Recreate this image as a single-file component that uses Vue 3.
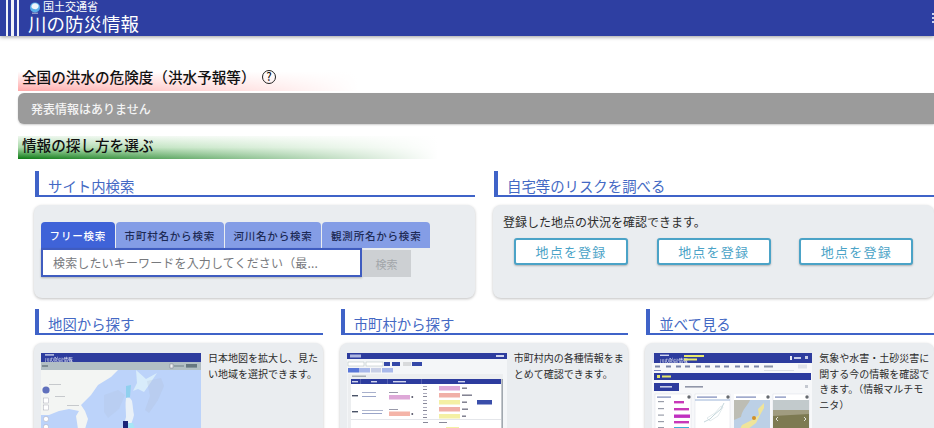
<script setup>
const tabs = ['フリー検索', '市町村名から検索', '河川名から検索', '観測所名から検索']
const spots = [1, 2, 3]
const riskRows = [
  { y: 33, c: '#dea8d8', w: 5 },
  { y: 40, c: '#f0b0a8', w: 10 },
  { y: 47, c: '#f4f0a4', w: 5 },
  { y: 54, c: '#f0b0a8', w: 6 },
  { y: 61, c: '#f4f0a4', w: 4 },
]
const monitorBars = [
  { y: 48, c: '#c838b8', w: 10, h: 2.4 },
  { y: 55, c: '#c838b8', w: 15, h: 2.4 },
  { y: 61.5, c: '#c030c0', w: 16, h: 3.4 },
  { y: 68, c: '#c838b8', w: 15, h: 2.4 },
  { y: 74, c: '#40b0d8', w: 15, h: 2 },
]
const monitorTabs = [3, 14, 24, 33, 44, 53, 63, 72, 83, 92, 102]
</script>

<template>
  <div class="page">
    <header class="top-bar">
      <div class="stripes">
        <span></span><span></span><span></span>
      </div>
      <div class="brand">
        <div class="ministry">
          <svg class="ministry-logo" viewBox="0 0 12 12" width="12" height="12">
            <circle cx="6" cy="5.4" r="5" fill="#58aeea" />
            <path d="M2.6 3.4a4 4 0 0 1 6.8-.4c.6 1.6-.2 3.6-2.2 4.2-2 .4-4-.6-4.8-2.2z" fill="#eef5fb" />
            <path d="M3 11.2h6" stroke="#b8c0dc" stroke-width="1" />
          </svg>
          <span>国土交通省</span>
        </div>
        <div class="site-name">川の防災情報</div>
      </div>
      <div class="burger">
        <span></span><span></span><span></span>
      </div>
    </header>

    <section class="alert-section">
      <h2 class="band band-red">
        全国の洪水の危険度（洪水予報等）
        <span class="help">?</span>
      </h2>
      <div class="notice">発表情報はありません</div>
    </section>

    <h2 class="band band-green">情報の探し方を選ぶ</h2>

    <div class="row-two">
      <div class="block">
        <h3 class="block-title">サイト内検索</h3>
        <div class="panel panel-search">
          <div class="tabs">
            <button
              v-for="(tab, i) in tabs"
              :key="tab"
              class="tab"
              :class="{ active: i === 0 }"
            >{{ tab }}</button>
          </div>
          <div class="search-row">
            <div class="search-input">検索したいキーワードを入力してください（最...</div>
            <button class="search-btn">検索</button>
          </div>
        </div>
      </div>

      <div class="block">
        <h3 class="block-title">自宅等のリスクを調べる</h3>
        <div class="panel panel-risk">
          <p class="risk-text">登録した地点の状況を確認できます。</p>
          <div class="spot-row">
            <button v-for="s in spots" :key="s" class="spot-btn">地点を登録</button>
          </div>
        </div>
      </div>
    </div>

    <div class="row-three">
      <div class="block">
        <h3 class="block-title">地図から探す</h3>
        <div class="panel panel-card">
          <svg class="thumb" viewBox="0 0 160 76" width="160" height="76">
            <rect width="160" height="76" fill="#bcd3fa" />
            <path d="M0 17H77L70 24 57 32 50 42 40 52 44 58 47 66 44 76H37L35 63 38 58 28 56 18 58 8 62 0 62z" fill="#f3f5f3" />
            <path d="M95 17L105 26 116 20 108 32 103 39 97 36 92 38 96 30z" fill="#d8ecfb" />
            <path d="M85 33l5-1-1 12-4 1z" fill="#8fd0ee" />
            <path d="M85 45c3-1 5 0 6 3 1 5 1 10 2 14-1 5-3 9-5 14h-7c1-4 3-7 4-12 0-6-1-13 0-19z" fill="#eaf1f8" />
            <rect x="82" y="68" width="5" height="8" fill="#1b2478" />
            <path d="M87 70h5l2 6h-7z" fill="#a6e6f6" />
            <path d="M106 28l14-3 3 8-6 14-9 13-4-3 5-14z" fill="#aebcd4" opacity=".25" />
            <path d="M63 42l14-5 7 5-6 14-11 9-4-6z" fill="#aebcd4" opacity=".2" />
            <rect x="8" y="31" width="12" height="1" fill="#c6c9cc" />
            <rect x="14" y="43" width="10" height="1" fill="#c6c9cc" />
            <rect x="26" y="52" width="12" height="1" fill="#c6c9cc" />
            <circle cx="5" cy="37" r="3.6" fill="#6070bc" />
            <rect x="2.5" y="45" width="5" height="5" fill="#fff" stroke="#99a" stroke-width=".4" />
            <rect x="2.5" y="52" width="5" height="5" fill="#fff" stroke="#99a" stroke-width=".4" />
            <circle cx="5" cy="66" r="2.6" fill="#fff" stroke="#99a" stroke-width=".4" />
            <circle cx="5" cy="74" r="2.6" fill="#fff" stroke="#99a" stroke-width=".4" />
            <rect width="160" height="9" fill="#2d3c9e" />
            <rect x="4" y="1.2" width="9" height="1.4" fill="#c9cfea" />
            <text x="4" y="7.8" font-size="4.6" fill="#fff">川の防災情報</text>
            <rect y="9" width="160" height="8" fill="#b2bfc4" />
            <rect x="1" y="12" width="6" height="2" fill="#7d8b92" />
            <rect x="129" y="11" width="3" height="4" fill="#eef1f2" stroke="#667" stroke-width=".4" />
            <rect x="133" y="12.4" width="10" height="1.2" fill="#7d8b92" />
            <rect x="145" y="11" width="11" height="3.6" fill="#667780" />
          </svg>
          <p class="card-text">日本地図を拡大し、見たい地域を選択できます。</p>
        </div>
      </div>

      <div class="block">
        <h3 class="block-title">市町村から探す</h3>
        <div class="panel panel-card">
          <svg class="thumb" viewBox="0 0 160 76" width="160" height="76">
            <rect width="160" height="76" fill="#f4f6f8" />
            <rect width="160" height="6" fill="#2d3c9e" />
            <rect x="3" y="1.5" width="11" height="3" fill="#aeb6e0" />
            <rect x="149" y="2" width="8" height="2" fill="#cfd4ee" />
            <rect x="1" y="9" width="16" height="4" fill="#fff" stroke="#9aa" stroke-width=".4" />
            <rect x="19" y="9" width="17" height="4" fill="#fff" stroke="#9aa" stroke-width=".4" />
            <rect x="37" y="9" width="6" height="4" fill="#3448a8" />
            <rect x="45" y="9" width="8" height="4" fill="#3448a8" />
            <rect x="56" y="9" width="8" height="4" fill="#d8dadc" />
            <rect x="65" y="9" width="10" height="4" fill="#3448a8" />
            <rect x="1" y="15" width="11" height="4.5" fill="#5876d8" />
            <rect x="12" y="15" width="11" height="4.5" fill="#a8b8ea" />
            <rect x="24" y="15" width="10" height="4.5" fill="#c8cfe6" />
            <rect x="35" y="15" width="11" height="4.5" fill="#a8b8ea" />
            <rect x="1" y="21" width="155" height="55" fill="#eceef0" />
            <rect x="5" y="22.5" width="14" height="1.5" fill="#a6adb4" />
            <rect x="4" y="26" width="150" height="5" fill="#2d3c9e" />
            <rect x="4" y="31" width="150" height="45" fill="#fff" />
            <rect x="5" y="28" width="6" height="1.4" fill="#d2d6ee" />
            <rect x="24" y="28" width="6" height="1.4" fill="#d2d6ee" />
            <rect x="46" y="28" width="13" height="1.4" fill="#d2d6ee" />
            <rect x="111" y="28" width="7" height="1.4" fill="#d2d6ee" />
            <rect x="13" y="26" width=".4" height="5" fill="#8d96cc" />
            <rect x="40" y="26" width=".4" height="5" fill="#8d96cc" />
            <rect x="74" y="26" width=".4" height="5" fill="#8d96cc" />
            <rect x="5" y="42" width="6" height="1.4" fill="#4a5368" />
            <rect x="15" y="39" width="14" height="1" fill="#a8b0cc" />
            <rect x="15" y="43" width="14" height="1" fill="#9aa5c8" />
            <rect x="42" y="39" width="9" height="1" fill="#99a" />
            <rect x="42" y="42" width="21" height="4.5" fill="#dea8d8" />
            <rect x="64.5" y="43" width="1.6" height="2" fill="#667" />
            <rect x="5" y="58" width="6" height="1.4" fill="#4a5368" />
            <rect x="15" y="57" width="21" height="1" fill="#b0b8d0" />
            <rect x="15" y="60" width="20" height="1" fill="#9aa5c8" />
            <rect x="42" y="56" width="9" height="1" fill="#99a" />
            <rect x="42" y="58.5" width="21" height="4.5" fill="#f4b4a8" />
            <rect x="64.5" y="60" width="1.6" height="2" fill="#667" />
            <template v-for="r in riskRows" :key="r.y">
              <rect x="76" :y="r.y" width="4" height="1" fill="#aab" />
              <rect x="76" :y="r.y + 3" width="4" height="1" fill="#889" />
              <rect x="92" :y="r.y" width="21" height="4.5" :fill="r.c" />
              <rect x="115" :y="r.y + 1.5" :width="r.w" height="1.4" fill="#778" />
            </template>
            <rect x="130" y="47" width="15" height="4.5" fill="#3a4eaa" />
            <rect x="76" y="69" width="5" height="1" fill="#889" />
            <rect x="92" y="69" width="8" height="1" fill="#889" />
            <rect x="99" y="74" width="13" height="2" fill="#f4f0a4" />
            <rect x="4" y="66" width="150" height=".5" fill="#c8ccd4" />
            <rect x="154.5" y="26" width="1.4" height="50" fill="#9aa0a8" />
          </svg>
          <p class="card-text">市町村内の各種情報をまとめて確認できます。</p>
        </div>
      </div>

      <div class="block">
        <h3 class="block-title">並べて見る</h3>
        <div class="panel panel-card">
          <svg class="thumb" viewBox="0 0 160 76" width="160" height="76">
            <rect width="160" height="76" fill="#f7f8fa" />
            <rect width="160" height="10" fill="#2d3c9e" />
            <rect x="0" width="2" height="10" fill="#e6e8f4" />
            <rect x="8" y="1.6" width="9" height="1.4" fill="#cfd4ee" />
            <text x="8" y="8.6" font-size="4.6" fill="#fff">川の防災情報</text>
            <rect x="32" y="2" width="20" height="2" fill="#e8e86a" />
            <rect x="32" y="5.5" width="13" height="2" fill="#e8e86a" />
            <rect x="138" y="3" width="2" height="4" fill="#e6e8f4" />
            <rect x="142" y="4" width="7" height="2" fill="#c6cce8" />
            <rect x="153" y="3" width="3" height="3" fill="#c6cce8" />
            <rect v-for="x in monitorTabs" :key="x" :x="x" y="12.5" width="5" height="2" fill="#7a84a8" />
            <rect x="2" y="17" width="7" height=".6" fill="#2d3c9e" />
            <rect x="112" y="12.5" width="9" height="2" fill="#8a92a8" />
            <rect x="112" y="17" width="30" height=".4" fill="#b4b8c4" />
            <rect x="146" y="11.5" width="9" height="4" fill="#dfe2ea" />
            <rect x="2" y="20" width="157" height="7" fill="#2d3c9e" />
            <rect x="5" y="22" width="3" height="3" fill="#e8e86a" />
            <rect x="10" y="22.5" width="9" height="2" fill="#e8e86a" />
            <rect x="2" y="30" width="25" height="8" fill="#2d3c9e" />
            <rect x="8" y="33" width="12" height="1.6" fill="#c6cce8" />
            <rect x="33" y="33" width="18" height="1.6" fill="#9096a8" />
            <rect x="153" y="32" width="3" height="3" fill="#c4c8d0" />

            <rect x="3" y="41" width="36" height="35" fill="#fff" stroke="#d4d8e0" stroke-width=".4" />
            <rect x="5" y="43.5" width="14" height="1.2" fill="#7a88b8" />
            <circle cx="37" cy="44" r="1.7" fill="#666a70" />
            <rect v-for="b in monitorBars" :key="b.y" x="22" :y="b.y" :width="b.w" :height="b.h" :fill="b.c" />
            <rect v-for="b in monitorBars" :key="'l' + b.y" x="6" :y="b.y" width="6" height="1.2" fill="#9a9eaa" />

            <rect x="43" y="41" width="35" height="35" fill="#fff" stroke="#d4d8e0" stroke-width=".4" />
            <rect x="45" y="43.5" width="20" height="1.2" fill="#7a88b8" />
            <circle cx="76" cy="44" r="1.7" fill="#666a70" />
            <rect x="43" y="46.5" width="35" height="1" fill="#9cb4d8" />
            <path d="M72 50l-3 6-7 6-4 4-6 3" fill="none" stroke="#aac4cc" stroke-width=".7" />
            <path d="M69 53l-6 7-8 5 3 3 8-5 5-9z" fill="none" stroke="#c4d4d8" stroke-width=".5" />

            <rect x="82" y="41" width="36" height="35" fill="#bcd0e6" />
            <rect x="82" y="41" width="36" height="6" fill="#fff" />
            <rect x="84" y="43.5" width="20" height="1.2" fill="#7a88b8" />
            <circle cx="116" cy="44" r="1.7" fill="#666a70" />
            <path d="M82 47h16c-2 5-8 10-9 17l-7 3z" fill="#bdbdb4" />
            <path d="M112 50l-6 6 1 6-7 5-10 5-2 4h8l8-6 4-8 4-7z" fill="#efe49a" />
            <circle cx="102" cy="65" r="2" fill="#d0902a" />

            <rect x="121" y="41" width="36" height="35" fill="#fff" stroke="#d4d8e0" stroke-width=".4" />
            <rect x="123" y="43.5" width="11" height="1.2" fill="#7a88b8" />
            <circle cx="155" cy="44" r="1.7" fill="#666a70" />
            <rect x="121" y="47" width="36" height="10" fill="#c2cacc" />
            <rect x="121" y="57" width="36" height="19" fill="#7d7a52" />
            <path d="M121 57h36v4l-36 2z" fill="#a09c80" />
            <path d="M126 64l-2 2 2 2M152 64l2 2-2 2" fill="none" stroke="#fff" stroke-width=".8" />
          </svg>
          <p class="card-text">気象や水害・土砂災害に関する今の情報を確認できます。（情報マルチモニタ）</p>
        </div>
      </div>
    </div>
  </div>
</template>

<style>
html,
body {
  margin: 0;
  background: #fff;
  overflow: hidden;
}
</style>

<style scoped>
.page {
  width: 934px;
  height: 428px;
  overflow: hidden;
  color: #222;
  font-family: "Noto Sans CJK JP", "Noto Sans", sans-serif;
}

.top-bar {
  display: flex;
  align-items: stretch;
  height: 36px;
  background: #2e3fa2;
  box-shadow: 0 1px 4px rgba(0, 0, 0, 0.4);
}

.stripes {
  display: flex;
  gap: 3px;
  margin-left: 6px;
}

.stripes span {
  width: 2px;
  background: #f2f3f8;
}

.stripes span:nth-child(2) {
  width: 3px;
}

.brand {
  margin-left: 9px;
  color: #fff;
  font-family: "Liberation Sans", "Noto Sans CJK JP", sans-serif;
}

.ministry {
  display: flex;
  align-items: center;
  gap: 2px;
  height: 13px;
  padding: 1px 0 0 1px;
  font-size: 11px;
  line-height: 13px;
}

.ministry-logo {
  flex: none;
}

.site-name {
  font-size: 18.5px;
  line-height: 21px;
  white-space: nowrap;
}

.burger {
  display: flex;
  flex-direction: column;
  gap: 2px;
  margin: 13px 0 0 auto;
}

.burger span {
  width: 2px;
  height: 2px;
  background: #c9d2f0;
}

.alert-section {
  margin: 32px 0 0 18px;
}

.band {
  display: flex;
  align-items: center;
  box-sizing: border-box;
  height: 23px;
  margin: 0;
  padding: 0 0 6px 4px;
  font-size: 14.6px;
  font-weight: 500;
  color: #111;
  white-space: nowrap;
}

.band-red {
  width: 340px;
  background:
    linear-gradient(to right, rgba(255, 255, 255, 0), #fff),
    linear-gradient(to bottom, #fff 15%, #ffa8a8 100%);
}

.band-green {
  width: 420px;
  margin: 12px 0 0 18px;
  background:
    linear-gradient(to right, rgba(255, 255, 255, 0), #fff),
    linear-gradient(to bottom, #eef7ee 0%, #a8d8a8 50%, #0a7a12 100%);
}

.help {
  flex: none;
  display: flex;
  align-items: center;
  justify-content: center;
  width: 12px;
  height: 12px;
  margin-left: 6.5px;
  border: 1.5px solid #222;
  border-radius: 50%;
  font-size: 11px;
  line-height: 1;
}

.notice {
  height: 31px;
  margin-top: 2px;
  padding-left: 13px;
  border-radius: 6px 0 0 6px;
  background: #9b9b9b;
  box-shadow: 0 1px 2px rgba(0, 0, 0, 0.2);
  color: #f4f4f4;
  font-size: 12px;
  font-weight: 500;
  line-height: 31px;
}

.row-two {
  display: grid;
  grid-template-columns: 1fr 1fr;
  gap: 19px;
  margin: 12px 0 0 35px;
}

.row-three {
  display: grid;
  grid-template-columns: repeat(3, 1fr);
  gap: 18px;
  margin: 11px 0 0 35px;
}

.block-title {
  height: 24px;
  margin: 0;
  padding-left: 9px;
  border-left: 4px solid #3f63c8;
  border-bottom: 2px solid #3f63c8;
  color: #4469c4;
  font-size: 14.4px;
  font-weight: 400;
  line-height: 29px;
  white-space: nowrap;
}

.panel {
  margin: 8px 0 0 -1px;
  border-radius: 8px;
  background: #eaedf0;
  box-shadow: 0 1px 3px rgba(0, 0, 0, 0.25);
}

.panel-search {
  height: 93px;
  padding: 17px 0 0 7px;
  box-sizing: border-box;
}

.tabs {
  display: flex;
  gap: 1.3px;
}

.tab {
  flex: none;
  box-sizing: border-box;
  height: 26px;
  padding: 0 8.6px;
  border: 0;
  border-radius: 4px 4px 0 0;
  background: #849de6;
  color: #1d2a55;
  font: 500 10.5px "Noto Sans CJK JP", sans-serif;
  letter-spacing: 0.8px;
  white-space: nowrap;
}

.tab.active {
  background: #3f63d8;
  color: #fff;
}

.search-row {
  display: flex;
  align-items: flex-end;
}

.search-input {
  flex: none;
  width: 321px;
  height: 29px;
  box-sizing: border-box;
  padding-left: 10px;
  border: 2px solid #3f5cc0;
  background: #fff;
  box-shadow: 0 1px 2px rgba(0, 0, 0, 0.25);
  color: #77797d;
  font-size: 12px;
  line-height: 25px;
  letter-spacing: 0.15px;
  white-space: nowrap;
}

.search-btn {
  width: 49px;
  height: 27px;
  border: 0;
  background: #cdd0d3;
  color: #a2a6aa;
  font: 400 11px "Noto Sans CJK JP", sans-serif;
}

.panel-risk {
  height: 93px;
  padding: 7px 0 0 10px;
  box-sizing: border-box;
}

.risk-text {
  margin: 0;
  font-size: 12px;
  line-height: 20px;
  color: #2c2c2c;
}

.spot-row {
  display: flex;
  gap: 28.7px;
  margin: 6px 0 0 11px;
}

.spot-btn {
  flex: none;
  width: 114px;
  height: 27px;
  border: 2px solid #4ba3c7;
  border-radius: 3px;
  background: #fff;
  box-shadow: 0 1px 2px rgba(0, 0, 0, 0.25);
  color: #4ba3c7;
  font: 400 13px "Noto Sans CJK JP", sans-serif;
  letter-spacing: 1.2px;
}

.panel-card {
  display: flex;
  gap: 7px;
  height: 100px;
  padding: 10px 3px 0 7px;
  box-sizing: border-box;
}

.thumb {
  flex: none;
  display: block;
  filter: blur(0.35px);
  font-family: "Noto Sans CJK JP", sans-serif;
}

.card-text {
  flex: 1;
  margin: -3px 0 0;
  color: #2c2c2c;
  font-size: 10px;
  line-height: 15.5px;
}
</style>
